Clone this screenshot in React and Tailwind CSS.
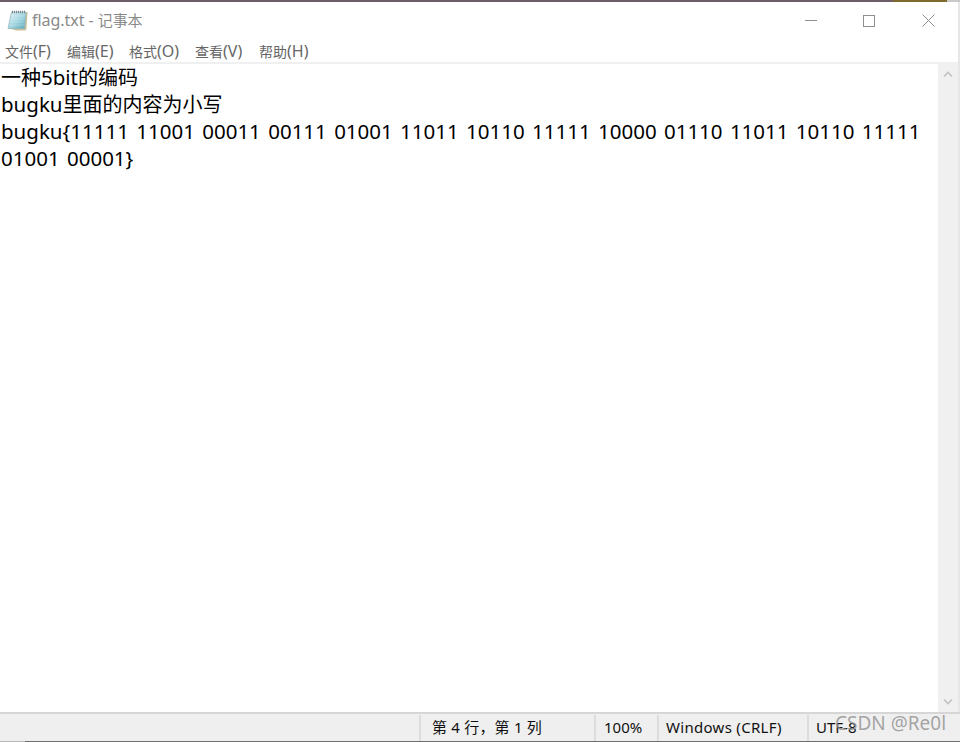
import React from "react";

const latin = { fontFamily: '"Noto Sans", "Noto Sans CJK SC", sans-serif' };

function Mix({ text, cjk }) {
  const parts = text.split(/([\u3000-\u9fff\uff00-\uffef]+)/);
  return (
    <>
      {parts.map((p, i) =>
        i % 2 === 1 ? <span key={i} className={cjk}>{p}</span> : <span key={i}>{p}</span>
      )}
    </>
  );
}

function NotepadIcon() {
  return (
    <svg width="21" height="21" viewBox="0 0 21 21" className="shrink-0">
      <defs>
        <linearGradient id="pad" x1="0" y1="0" x2="1" y2="1">
          <stop offset="0" stopColor="#e4f3f6" />
          <stop offset="0.5" stopColor="#a6d8e2" />
          <stop offset="1" stopColor="#5aa8bc" />
        </linearGradient>
      </defs>
      <path d="M5 2 H20.5 L19.5 18.5 C19.4 20 18.8 20.5 18 20.5 H9 L1.5 18 Z" fill="#c9c19d" />
      <path d="M4.5 2 H19 L17.5 18.5 H1 Z" fill="url(#pad)" stroke="#8fb2bb" strokeWidth="0.7" />
      <path d="M4 6 H18 M3.7 9 H17.7 M3.4 12 H17.4 M3.1 15 H17.1" stroke="#ffffff" strokeOpacity="0.35" strokeWidth="0.7" />
      <path d="M5 2 H19" stroke="#7d878b" strokeWidth="2.4" strokeDasharray="1 1" />
    </svg>
  );
}

function Cell({ className = "", children }) {
  return <div className={`flex items-center h-[26px] border-l-2 border-[#dcdcdc] text-[15px] text-[#111] ${className}`}>{children}</div>;
}

function Menu({ text, className }) {
  return (
    <span className={`text-[16px] whitespace-nowrap ${className}`}>
      <Mix text={text} cjk="text-[14px]" />
    </span>
  );
}

export default function App() {
  return (
    <div className="relative flex flex-col w-[960px] h-[742px] bg-white overflow-hidden" style={latin}>
      <div className="flex h-[2px] shrink-0 bg-[#6e5c66]">
        <div className="ml-[893px] w-[54px] bg-[#7d6a2c]" />
        <div className="w-[13px] bg-[#c9c9c9]" />
      </div>

      <div className="flex flex-1 min-h-0">
        <div className="flex flex-col flex-1 min-w-0">
          <div className="flex items-center h-[37px] shrink-0">
            <div className="ml-[7px]"><NotepadIcon /></div>
            <span className="ml-[4px] mb-[2px] text-[16px] text-[#8a8a8a] tracking-[-0.05px]">
              <Mix text="flag.txt - 记事本" cjk="text-[15px]" />
            </span>
            <div className="flex items-center ml-auto mr-[23px]">
              <div className="w-[12px] h-[1px] bg-[#8f8f8f]" />
              <div className="ml-[46px] w-[12px] h-[12px] border border-[#8f8f8f]" />
              <svg className="ml-[47px]" width="13" height="13" viewBox="0 0 13 13"><path d="M0.5 0.5 L12.5 12.5 M12.5 0.5 L0.5 12.5" stroke="#8f8f8f" strokeWidth="1" /></svg>
            </div>
          </div>

          <div className="flex items-center h-[23px] pl-[5px] pt-[1px] shrink-0 text-[#666]">
            <Menu text="文件(F)" className="w-[62px]" />
            <Menu text="编辑(E)" className="w-[62px]" />
            <Menu text="格式(O)" className="w-[66px]" />
            <Menu text="查看(V)" className="w-[64px]" />
            <Menu text="帮助(H)" className="w-[64px]" />
          </div>

          <div className="h-[2px] bg-[#f0f0f0] shrink-0" />

          <div className="flex flex-1 min-h-0">
            <div className="flex-1 pl-[1px] text-[20.5px] leading-[27px] text-black [word-spacing:2px]">
              <div><Mix text="一种5bit的编码" cjk="text-[20px]" /></div>
              <div><Mix text="bugku里面的内容为小写" cjk="text-[20px]" /></div>
              <div>bugku{"{"}11111 11001 00011 00111 01001 11011 10110 11111 10000 01110 11011 10110 11111</div>
              <div>01001 00001{"}"}</div>
            </div>
            <div className="flex flex-col justify-between items-center w-[20px] py-[7px] bg-[#f0f0f0] shrink-0">
              <svg width="10" height="6" viewBox="0 0 10 6"><path d="M1 5.5 L5 1.5 L9 5.5" fill="none" stroke="#c2c2c2" strokeWidth="1.6" /></svg>
              <svg width="10" height="6" viewBox="0 0 10 6"><path d="M1 0.5 L5 4.5 L9 0.5" fill="none" stroke="#c2c2c2" strokeWidth="1.6" /></svg>
            </div>
          </div>
        </div>
        <div className="w-[2px] bg-[#e6e6e6] shrink-0" />
      </div>

      <div className="flex items-center h-[29px] shrink-0 bg-[#efefef] border-t-2 border-[#d6d6d6]">
        <div className="w-[419px] shrink-0" />
        <Cell className="w-[175px] pl-[11px]"><span className="tracking-[0.2px]">第 4 行，第 1 列</span></Cell>
        <Cell className="w-[63px] pl-[8px]">100%</Cell>
        <Cell className="w-[150px] pl-[7px] tracking-[0.3px]">Windows (CRLF)</Cell>
        <Cell className="flex-1 pl-[7px]">UTF-8</Cell>
      </div>
      <div className="flex h-[1px] shrink-0 bg-[#6e6e6e]">
        <div className="w-[25px] bg-[#b5b5b5]" />
      </div>

      <div className="absolute left-[835px] top-[711px] text-[19px] leading-[24px] text-[#8f8f8f]/80 whitespace-nowrap">CSDN @Re0l</div>
    </div>
  );
}
